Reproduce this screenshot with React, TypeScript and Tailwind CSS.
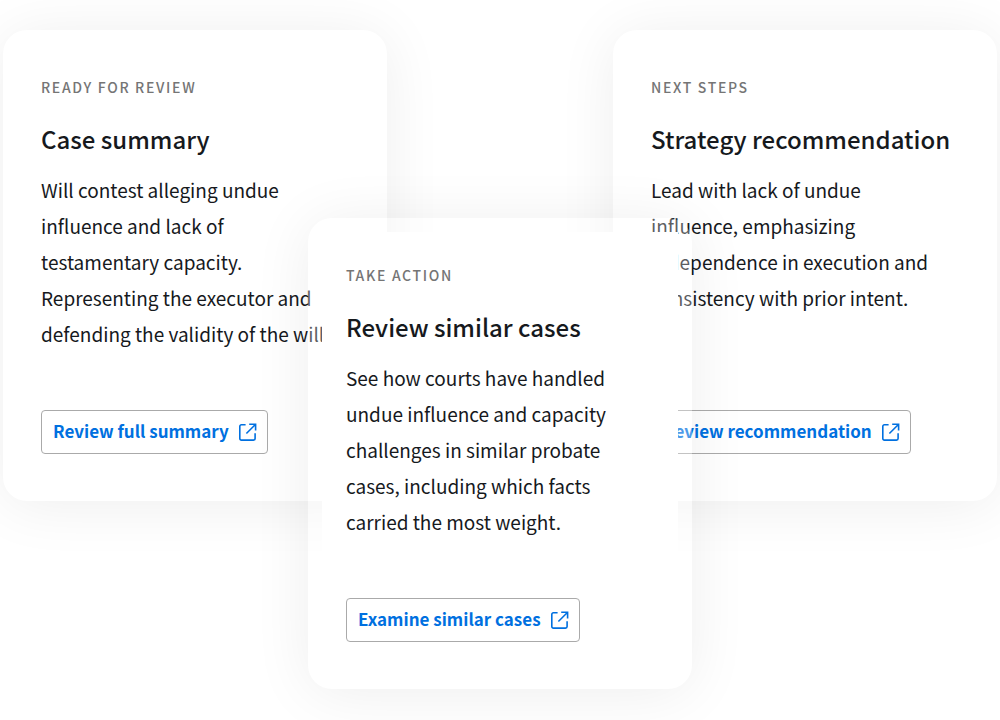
interface CardProps {
  eyebrow: string
  title: string
  body: string
  action: string
}

const SUMMARY: CardProps = {
  eyebrow: 'Ready for review',
  title: 'Case summary',
  body: 'Will contest alleging undue influence and lack of testamentary capacity. Representing the executor and defending the validity of the will.',
  action: 'Review full summary',
}

const SIMILAR: CardProps = {
  eyebrow: 'Take action',
  title: 'Review similar cases',
  body: 'See how courts have handled undue influence and capacity challenges in similar probate cases, including which facts carried the most weight.',
  action: 'Examine similar cases',
}

const STRATEGY: CardProps = {
  eyebrow: 'Next steps',
  title: 'Strategy recommendation',
  body: 'Lead with lack of undue influence, emphasizing independence in execution and consistency with prior intent.',
  action: 'Review recommendation',
}

function ExternalIcon() {
  return (
    <svg viewBox="0 0 20 20" fill="none" stroke="currentColor" strokeWidth={1.6} className="w-5 h-5 shrink-0" aria-hidden="true">
      <path d="M8.6 2.8H4.4a1.6 1.6 0 0 0-1.6 1.6v12.1a1.6 1.6 0 0 0 1.6 1.6h12.1a1.6 1.6 0 0 0 1.6-1.6v-5.2" />
      <path d="M12.2 2.3h6.4v6.2M18.4 2.5L9.4 11.5" />
    </svg>
  )
}

function CardContent({ eyebrow, title, body, action }: CardProps) {
  return (
    <>
      <p className="text-[14px] leading-5 font-medium uppercase tracking-[0.12em] text-[#757575]">{eyebrow}</p>
      <h2 className="mt-6 text-[24px] leading-9 font-medium whitespace-nowrap">{title}</h2>
      <p className="mt-[15px] min-h-[180px] max-w-[296px] text-[19px] leading-9">{body}</p>
      <button className="mt-[58px] h-11 flex items-center gap-2 pl-[11px] pr-2.5 rounded border border-[#aaaaaa] text-[17px] font-bold text-[#0070e0] whitespace-nowrap">
        <span className="pb-0.5">{action}</span>
        <ExternalIcon />
      </button>
    </>
  )
}

export default function App() {
  return (
    <main className="grid min-h-dvh items-start overflow-hidden bg-white px-[3px] pt-[30px] pb-8 font-['Noto_Sans_CJK_SC',sans-serif] text-[#16191d]">
      <article className="[grid-area:1/1] justify-self-start w-96 rounded-3xl bg-white px-[38px] py-[47px] shadow-[0_4px_60px_rgba(0,0,0,0.07)]">
        <CardContent {...SUMMARY} />
      </article>

      <article className="[grid-area:1/1] justify-self-end w-96 rounded-3xl bg-white px-[38px] py-[47px] shadow-[0_4px_60px_rgba(0,0,0,0.07)]">
        <CardContent {...STRATEGY} />
      </article>

      {/* Front card: translucent rim around an opaque face */}
      <article className="[grid-area:1/1] justify-self-center z-10 mt-[188px] w-96 rounded-3xl bg-white/30 p-3.5 shadow-[0_4px_60px_rgba(0,0,0,0.07)]">
        <div className="bg-white px-6 py-[33px]">
          <CardContent {...SIMILAR} />
        </div>
      </article>
    </main>
  )
}
